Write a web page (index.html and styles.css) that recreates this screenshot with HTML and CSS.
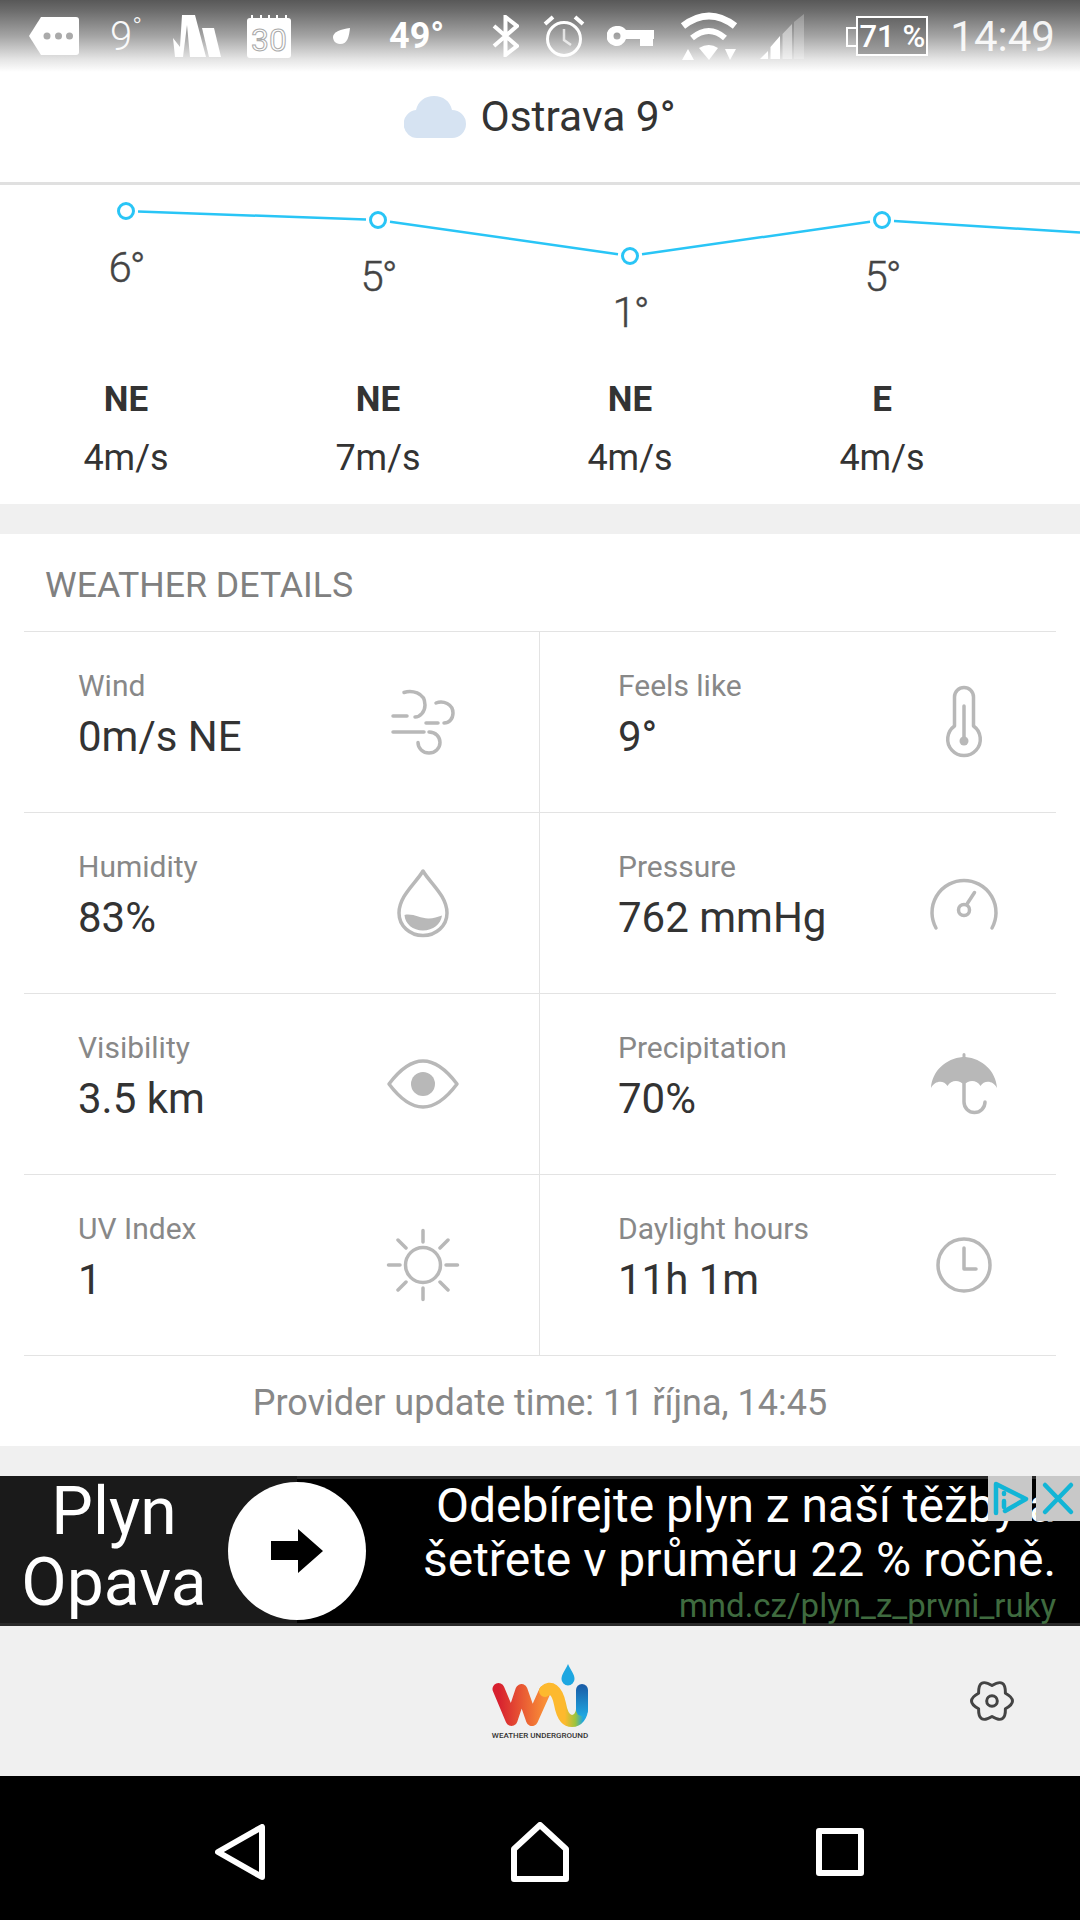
FILE: index.html
```html
<!doctype html>
<html>

<head>
  <title>Weather</title>
  <link rel="stylesheet" href="styles.css">
</head>

<body>
  <div class="status">
    <svg class="st-tag" width="50" height="38" viewBox="0 0 50 38">
      <path d="M12 0H47a3 3 0 0 1 3 3V35a3 3 0 0 1-3 3H12L0 19Z" fill="#fff" />
      <circle cx="18" cy="19" r="3.5" fill="#aaa" />
      <circle cx="29.5" cy="19" r="3.5" fill="#aaa" />
      <circle cx="40.5" cy="19" r="3.5" fill="#aaa" />
    </svg>
    <span class="st-temp">9<sup>°</sup></span>
    <svg class="st-logo" width="48" height="42" viewBox="0 0 48 42">
      <path d="M2 42 0 23 7 32 9 0H22L33 42H17L14 10 10 42Z" fill="#fff" />
      <path d="M29 13H41L48 42H36Z" fill="#fff" />
    </svg>
    <svg class="st-cal" width="44" height="43" viewBox="0 0 44 43">
      <rect y="3" width="44" height="40" rx="3" fill="#fff" />
      <path d="M5 0V4M14 0V4M22 0V4M30 0V4M39 0V4" stroke="#fff" stroke-width="2" />
      <text x="22" y="36" text-anchor="middle" class="st-cal-num">30</text>
    </svg>
    <svg class="st-drop" width="17" height="16" viewBox="0 0 17 16">
      <path d="M17 0C16 8 15 16 7 16 2 16 0 12 0 9 0 4 8 1 17 0Z" fill="#fff" />
    </svg>
    <span class="st-level">49°</span>
    <svg class="st-bt" width="27" height="42" viewBox="0 0 27 42">
      <path d="M2 11 25 31 13.5 40V2L25 11 2 31" fill="none" stroke="#fff" stroke-width="4" />
    </svg>
    <svg class="st-alarm" width="42" height="42" viewBox="0 0 42 42">
      <circle cx="21" cy="24" r="16.5" fill="none" stroke="#fff" stroke-width="3" />
      <path d="M21 14V25L28 30" fill="none" stroke="#fff" stroke-width="2.5" opacity=".7" />
      <path d="M2 9 10 2M32 2 40 9" fill="none" stroke="#fff" stroke-width="4" />
    </svg>
    <svg class="st-key" width="47" height="20" viewBox="0 0 47 20">
      <path fill-rule="evenodd" fill="#fff"
        d="M10 0A10 10 0 0 1 19 4H47V13H46V20H33V13H19A10 10 0 1 1 10 0ZM10 6.500A3.500 3.500 0 1 0 10 13.500 3.500 3.500 0 0 0 10 6.500Z" />
    </svg>
    <svg class="st-wifi" width="58" height="48" viewBox="0 0 58 48">
      <path d="M3 14Q29-6 55 14" fill="none" stroke="#fff" stroke-width="7" />
      <path d="M12 26Q29 12 45 26" fill="none" stroke="#fff" stroke-width="6" />
      <path d="M19 36Q29 30 38 36L29 48ZM2 48 8 37 14 48ZM45 37H56L50 48Z" fill="#fff" />
    </svg>
    <svg class="st-signal" width="44" height="45" viewBox="0 0 44 45">
      <path d="M0 45 8 37V45ZM10.5 45V33L20 22V45Z" fill="#fff" />
      <path d="M22.5 45V20L32 10V45Z" fill="#fff" opacity=".45" />
      <path d="M34 45V8L44 0V45Z" fill="#fff" opacity=".25" />
    </svg>
    <div class="battery"><span class="battery-nub"></span><span class="battery-level">71 %</span></div>
    <span class="st-time">14:49</span>
  </div>

  <header class="city">
    <svg class="city-icon" width="62" height="42" viewBox="0 0 62 42">
      <path d="M14 42A14 14 0 0 1 12 14.100C14 5 21 0 30 0 39 0 46 5 48 14A14 14 0 0 1 48 42Z" fill="#d6e3f2" />
    </svg>
    <h1>Ostrava 9°</h1>
  </header>

  <section class="forecast">
    <svg class="trend" width="1080" height="185" viewBox="0 0 1080 185">
      <!-- segments stop short of the markers -->
      <path class="trend-line" d="M138 26.4 366 34.6M390 36.7 618 69.3M642 69.3 870 36.7M894 36 1080 47.6" />
      <circle class="trend-dot" cx="126" cy="26" r="7.5" />
      <circle class="trend-dot" cx="378" cy="35" r="7.5" />
      <circle class="trend-dot" cx="630" cy="71" r="7.5" />
      <circle class="trend-dot" cx="882" cy="35" r="7.5" />
      <text class="trend-temp" x="126" y="97">6°</text>
      <text class="trend-temp" x="378" y="106">5°</text>
      <text class="trend-temp" x="630" y="142">1°</text>
      <text class="trend-temp" x="882" y="106">5°</text>
    </svg>
    <div class="winds">
      <div class="wind"><b>NE</b><span>4m/s</span></div>
      <div class="wind"><b>NE</b><span>7m/s</span></div>
      <div class="wind"><b>NE</b><span>4m/s</span></div>
      <div class="wind"><b>E</b><span>4m/s</span></div>
    </div>
  </section>

  <section class="details">
    <h2>WEATHER DETAILS</h2>
    <div class="details-grid">
      <div class="cell">
        <div class="cell-text"><p class="cell-label">Wind</p><p class="cell-value">0m/s NE</p></div>
        <svg class="glyph" width="80" height="80" viewBox="0 0 80 80">
          <path d="M21 10.5C28 8 42 10 42 23 42 30 37 35 32 35M10 34H24M53 21C60 18 70 22 70 31 70 37 66 41 61 41M43 41H55M10 50H41M46 50C53 50 57 55 57 60.5A11 10.5 0 0 1 35 60.5" />
        </svg>
      </div>
      <div class="cell">
        <div class="cell-text"><p class="cell-label">Feels like</p><p class="cell-value">9°</p></div>
        <svg class="glyph" width="80" height="80" viewBox="0 0 80 80">
          <path d="M30.5 44V15a9.5 9.5 0 0 1 19 0V44A16.3 16.3 0 1 1 30.5 44ZM40 24V58" />
          <circle class="glyph-fill" cx="40" cy="59" r="4.5" />
        </svg>
      </div>
      <div class="cell">
        <div class="cell-text"><p class="cell-label">Humidity</p><p class="cell-value">83%</p></div>
        <svg class="glyph" width="80" height="80" viewBox="0 0 80 80">
          <path d="M40 8C33 20 16 33 16 50 16 63 27 72.5 40 72.5 53 72.5 64 63 64 50 64 33 47 20 40 8Z" />
          <path class="glyph-fill" d="M21.5 52C30 50 38 56 46 55.5 50 55.5 55 54 59 52.5 58 61 50 67.5 40 67.5 30 67.5 22 61 21.5 52Z" />
        </svg>
      </div>
      <div class="cell">
        <div class="cell-text"><p class="cell-label">Pressure</p><p class="cell-value">762 mmHg</p></div>
        <svg class="glyph" width="80" height="80" viewBox="0 0 80 80">
          <path d="M12 65A32 32 0 1 1 68 65M43 41 50.5 29.5" />
          <circle cx="40" cy="47" r="5.5" />
        </svg>
      </div>
      <div class="cell">
        <div class="cell-text"><p class="cell-label">Visibility</p><p class="cell-value">3.5 km</p></div>
        <svg class="glyph" width="80" height="80" viewBox="0 0 80 80">
          <path d="M6 40C18 24 30 17 40 17 50 17 62 24 74 40 62 56 50 63 40 63 30 63 18 56 6 40Z" />
          <circle class="glyph-fill" cx="40" cy="40" r="12" />
        </svg>
      </div>
      <div class="cell">
        <div class="cell-text"><p class="cell-label">Precipitation</p><p class="cell-value">70%</p></div>
        <svg class="glyph" width="80" height="80" viewBox="0 0 80 80">
          <path class="glyph-fill" d="M38.5 13V10.5a1.5 1.5 0 0 1 3 0V13C58 14.5 72 27 73 44 69 36 60 36 56.5 42 53 36 45 35 40 41 35 35 27 36 23.5 42 20 36 11 36 7 44 8 27 22 14.5 38.5 13Z" />
          <path d="M40 40V58A10.5 10.5 0 0 0 61 58" />
        </svg>
      </div>
      <div class="cell">
        <div class="cell-text"><p class="cell-label">UV Index</p><p class="cell-value">1</p></div>
        <svg class="glyph" width="80" height="80" viewBox="0 0 80 80">
          <circle cx="40" cy="40" r="17.5" />
          <path d="M40 5.5V17M40 63V74.5M5.5 40H17M63 40H74.5M15 15 23 23M65 15 57 23M15 65 23 57M65 65 57 57" />
        </svg>
      </div>
      <div class="cell">
        <div class="cell-text"><p class="cell-label">Daylight hours</p><p class="cell-value">11h 1m</p></div>
        <svg class="glyph" width="80" height="80" viewBox="0 0 80 80">
          <circle cx="40" cy="40" r="26" />
          <path d="M40 23V44H52" />
        </svg>
      </div>
    </div>
    <p class="provider">Provider update time: 11 října, 14:45</p>
  </section>

  <aside class="ad">
    <div class="ad-brand">Plyn<br>Opava</div>
    <div class="ad-copy">
      <p class="ad-headline"><span class="ad-lead">Odebírejte plyn z naší těžby a</span><br>šetřete v průměru 22 % ročně.</p>
      <p class="ad-url">mnd.cz/plyn_z_prvni_ruky</p>
    </div>
    <div class="ad-go">
      <svg width="52" height="44" viewBox="0 0 52 44"><path d="M0 12H27V0L52 22 27 44V31H0Z" /></svg>
    </div>
    <div class="ad-badge ad-badge--info">
      <svg width="44" height="45" viewBox="0 0 44 45">
        <path d="M8 37V8L38 23 17 35" />
        <path d="M16 25V31M16 17V18" />
      </svg>
    </div>
    <div class="ad-badge ad-badge--close">
      <svg width="44" height="45" viewBox="0 0 44 45"><path d="M9 9 35 36M35 9 9 36" /></svg>
    </div>
  </aside>

  <footer class="bottom">
    <svg class="wu" width="100" height="82" viewBox="0 0 100 82">
      <defs>
        <linearGradient id="wu-w" x1="0" x2="1" y1="0" y2="0">
          <stop offset="0" stop-color="#d7202f" />
          <stop offset="1" stop-color="#f98f37" />
        </linearGradient>
        <linearGradient id="wu-u" gradientUnits="userSpaceOnUse" x1="56" x2="98" y1="30" y2="30">
          <stop offset="0" stop-color="#fdb92e" />
          <stop offset=".45" stop-color="#fdb92e" />
          <stop offset=".7" stop-color="#9cc43c" />
          <stop offset=".88" stop-color="#1ea7e1" />
        </linearGradient>
        <linearGradient id="wu-arm" gradientUnits="userSpaceOnUse" x1="0" x2="0" y1="26" y2="56">
          <stop offset="0" stop-color="#1a5ea8" />
          <stop offset="1" stop-color="#1ea7e1" />
        </linearGradient>
      </defs>
      <path class="wu-stroke" stroke="url(#wu-w)" d="M8.5 29 21.5 60 31.5 30 42 60 55 31" />
      <path class="wu-stroke" stroke="url(#wu-u)" d="M55 31C60 26 67 29 70 44 72 55 76 61 82 61 88 61 92 55 92 49" />
      <path class="wu-stroke" stroke="url(#wu-arm)" d="M92 50V30" />
      <path d="M78 4C75 11 71.5 14 71.5 19A6.5 6.5 0 0 0 84.5 19C84.5 14 81 11 78 4Z" fill="#1ea7e1" />
      <text class="wu-name" x="50" y="78">WEATHER UNDERGROUND</text>
    </svg>
    <svg class="gear" width="48" height="48" viewBox="-24 -24 48 48">
      <path d="M0-15.5Q13.8-23.9 13.4-7.75 27.6 0 13.4 7.75 13.8 23.9 0 15.5-13.8 23.9-13.4 7.75-27.6 0-13.4-7.75-13.8-23.9 0-15.5Z" />
      <circle r="5.3" />
    </svg>
  </footer>

  <nav class="nav">
    <svg width="50" height="56" viewBox="0 0 50 56">
      <path d="M47 3V53L3 28Z" />
    </svg>
    <svg width="58" height="60" viewBox="0 0 58 60">
      <path d="M29 3 55 27V57H3V27Z" />
    </svg>
    <svg width="48" height="48" viewBox="0 0 48 48">
      <path d="M3 3H45V45H3Z" />
    </svg>
  </nav>
</body>

</html>
```

FILE: styles.css
```css
* {
  box-sizing: border-box;
  margin: 0;
  padding: 0;
}

html,
body {
  width: 1080px;
  height: 1920px;
  overflow: hidden;
}

body {
  font-family: Roboto, "Noto Sans", sans-serif;
  color: #333;
  background: #f0f0f0;
}

/** Status bar */

.status {
  height: 72px;
  padding-left: 29px;
  display: flex;
  align-items: center;
  color: #fff;
  background: linear-gradient(#585858, #6c6c6c 15%, #a4a4a4 50%, #e4e4e4 82%, #fff);
}

.st-temp {
  margin-left: 31px;
  font-size: 40px;
  font-weight: 300;
  opacity: 0.95;
}

.st-temp sup {
  font-size: 26px;
  line-height: 0;
}

.st-logo { margin-left: 31px; }
.st-cal { margin-left: 26px; }
.st-drop { margin-left: 42px; }

.st-cal-num {
  font-size: 32px;
  fill: #fff;
  stroke: #aaa;
  stroke-width: 1;
}

.st-level {
  margin-left: 39px;
  font-size: 36px;
  font-weight: 700;
}

.st-bt { margin-left: 48px; }
.st-alarm { margin-left: 24px; }
.st-key { margin-left: 22px; }
.st-wifi { margin-left: 26px; }
.st-signal { margin-left: 22px; }

.battery {
  margin-left: 52px;
  width: 72px;
  height: 40px;
  position: relative;
  display: flex;
  align-items: center;
  justify-content: center;
  border: 2px solid #fff;
  background: linear-gradient(#666, #a0a0a0);
}

.battery-nub {
  position: absolute;
  left: -12px;
  top: 9px;
  width: 10px;
  height: 20px;
  border: 2px solid #fff;
  border-right: none;
}

.battery-level {
  font-size: 31px;
  font-weight: 500;
  white-space: nowrap;
}

.st-time {
  margin-left: 22px;
  font-size: 42px;
  opacity: 0.9;
}

/** City header */

.city {
  height: 113px;
  padding-bottom: 22px;
  display: flex;
  align-items: center;
  justify-content: center;
  gap: 14px;
  background: #fff;
  border-bottom: 3px solid #e0e0e0;
}

.city-icon {
  margin-top: 2px;
}

.city h1 {
  font-size: 42.5px;
  font-weight: 400;
}

/** Forecast chart */

.forecast {
  height: 319px;
  background: #fff;
}

.trend {
  display: block;
}

.trend-line {
  fill: none;
  stroke: #29c5f6;
  stroke-width: 2.5;
}

.trend-dot {
  fill: #fff;
  stroke: #29c5f6;
  stroke-width: 3;
}

.trend-temp {
  font-size: 42px;
  font-weight: 300;
  letter-spacing: -2px;
  fill: #444;
  stroke: #444;
  stroke-width: 0.4;
  text-anchor: middle;
}

.winds {
  display: flex;
}

.wind {
  width: 252px;
  display: flex;
  flex-direction: column;
  align-items: center;
  font-size: 36px;
  line-height: 59px;
}

.wind b {
  font-size: 35px;
  font-weight: 700;
}

/** Details table */

.details {
  margin-top: 30px;
  height: 912px;
  background: #fff;
}

.details h2 {
  height: 97px;
  padding: 24px 0 0 45px;
  font-size: 35.7px;
  line-height: 54px;
  font-weight: 400;
  color: #808080;
}

.details-grid {
  margin: 0 24px;
  display: grid;
  grid-template-columns: 516px 516px;
  grid-auto-rows: 181px;
  border-bottom: 1px solid #e3e3e3;
}

.cell {
  display: flex;
  align-items: center;
  padding: 0 52px 0 78px;
  border-top: 1px solid #e3e3e3;
}

.cell:nth-child(odd) {
  padding: 0 76px 0 54px;
  border-right: 1px solid #e3e3e3;
}

.cell-text {
  flex: 1;
  padding-bottom: 16px;
}

.cell-label {
  font-size: 30px;
  line-height: 40px;
  color: #888;
}

.cell-value {
  font-size: 42px;
  line-height: 52px;
  margin-top: 5px;
}

.glyph {
  flex: none;
  fill: none;
  stroke: #b8b8b8;
  stroke-width: 3.5;
  stroke-linecap: round;
  stroke-linejoin: round;
}

.glyph-fill {
  fill: #b8b8b8;
  stroke: none;
}

.provider {
  padding-top: 27px;
  text-align: center;
  font-size: 36px;
  line-height: 40px;
  color: #888;
}

/** Banner */

.ad {
  margin-top: 30px;
  height: 150px;
  position: relative;
  display: flex;
  color: #fff;
  background: #000;
  border-top: 3px solid #2a2a2a;
  border-bottom: 3px solid #2a2a2a;
}

.ad-brand {
  width: 297px;
  padding-right: 69px;
  text-align: center;
  font-size: 66px;
  line-height: 71px;
  margin-top: -3px;
  background: #1a1a1a;
  white-space: nowrap;
}

.ad-copy {
  flex: 1;
  padding-right: 24px;
  display: flex;
  flex-direction: column;
}

.ad-headline {
  margin-left: 102px;
  margin-right: -24px;
  text-align: center;
  font-size: 48px;
  line-height: 54px;
  white-space: nowrap;
}

.ad-lead {
  padding-left: 12px;
}

.ad-url {
  padding-top: 2px;
  text-align: right;
  font-size: 33px;
  line-height: 34px;
  color: #3f6b3f;
}

.ad-go {
  position: absolute;
  left: 228px;
  top: 3px;
  width: 138px;
  height: 138px;
  border-radius: 50%;
  display: flex;
  align-items: center;
  justify-content: center;
  background: #fff;
}

.ad-badge {
  position: absolute;
  top: -3px;
  width: 44px;
  height: 45px;
  background: #c8c8c8;
}

.ad-badge svg {
  display: block;
  fill: none;
  stroke: #12b5d6;
  stroke-width: 4.5;
  stroke-linecap: round;
  stroke-linejoin: round;
}

.ad-badge--info {
  right: 48px;
}

.ad-badge--close {
  right: 0;
}

/** Attribution strip */

.bottom {
  height: 150px;
  display: grid;
  grid-template-columns: 1fr auto 1fr;
  align-items: center;
}

.wu {
  grid-column: 2;
}

.wu-stroke {
  fill: none;
  stroke-width: 12;
  stroke-linecap: round;
  stroke-linejoin: round;
}

.wu-name {
  font-size: 8px;
  font-weight: 500;
  fill: #333;
  text-anchor: middle;
}

.gear {
  justify-self: end;
  margin-right: 64px;
  fill: none;
  stroke: #444;
  stroke-width: 3;
  stroke-linejoin: round;
}

/** Navigation bar */

.nav {
  height: 144px;
  padding: 8px 0 0 90px;
  display: grid;
  grid-template-columns: repeat(3, 300px);
  justify-items: center;
  align-items: center;
  background: #000;
}

.nav svg {
  fill: none;
  stroke: #fff;
  stroke-width: 6;
  stroke-linejoin: round;
}
```
